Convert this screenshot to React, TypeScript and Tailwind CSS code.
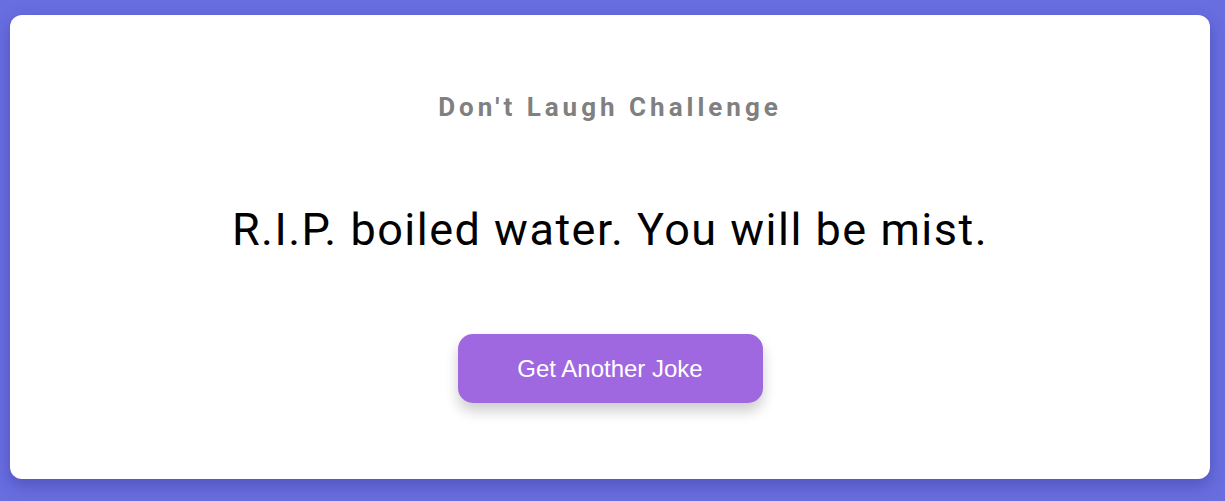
export default function App() {
  return (
    <div className="min-h-[501px] bg-[#686de0] pl-[10px] pt-[15px] pb-[22px]">
      <div
        className="w-[1200px] bg-white rounded-[12px] h-[464px] flex flex-col items-center shadow-[0_6px_16px_rgba(40,40,120,0.35)]"
        style={{ fontFamily: 'Roboto, "Liberation Sans", sans-serif' }}
      >
        <h3 className="mt-[77px] text-[26px] leading-[30px] font-bold tracking-[4px] text-[#808080]">
          Don't Laugh Challenge
        </h3>
        <p className="mt-[81px] text-[45px] leading-[54px] tracking-[1.5px] text-black">
          R.I.P. boiled water. You will be mist.
        </p>
        <button
          className="mt-[77px] w-[305px] h-[69px] rounded-[15px] bg-[#9f68e0] text-white text-[24px] shadow-[0_8px_14px_rgba(0,0,0,0.2)]"
          style={{ fontFamily: '"Liberation Sans", Arial, sans-serif' }}
        >
          Get Another Joke
        </button>
      </div>
    </div>
  );
}
